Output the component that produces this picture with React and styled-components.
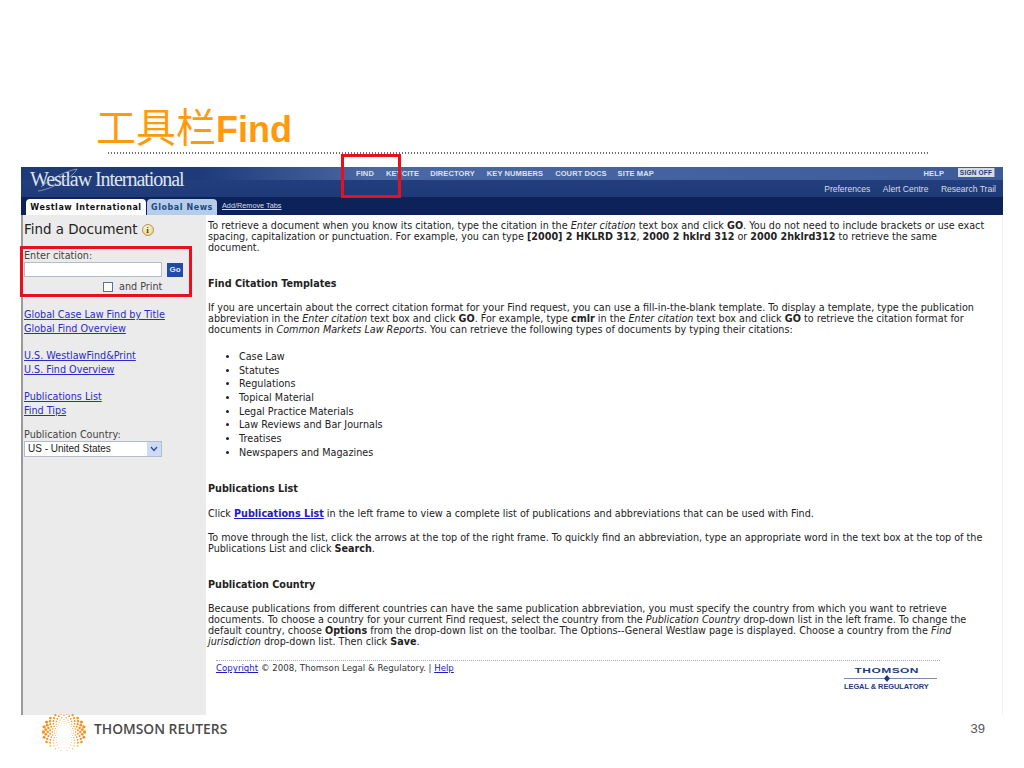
import React from "react";
import styled, { createGlobalStyle } from "styled-components";

const GlobalStyle = createGlobalStyle`
  html, body {
    margin: 0;
    padding: 0;
    background: #fff;
  }
  body {
    width: 1024px;
    height: 768px;
    overflow: hidden;
  }
`;

const Slide = styled.div`
  position: relative;
  width: 1024px;
  height: 768px;
  overflow: hidden;
  display: flex;
  flex-direction: column;
  background: #fff;
`;

const Title = styled.h1`
  margin: 0;
  padding: 98px 0 0 96px;
  height: 54px;
  line-height: 54px;
  font-family: "Liberation Sans", Arial, sans-serif;
  font-size: 36px;
  font-weight: bold;
  color: #ff9a0d;
  white-space: nowrap;
  span {
    font-family: "Noto Sans CJK SC", sans-serif;
    font-size: 40px;
    font-weight: 400;
  }
`;

const DottedRule = styled.div`
  margin: 0 94px 0 107px;
  height: 2px;
  background-image: radial-gradient(circle, #6d6d6d 0.8px, transparent 1px);
  background-size: 3px 2px;
`;

const Frame = styled.div`
  margin: 13px 21px 0 21px;
  height: 548px;
  display: flex;
  flex-direction: column;
  font-family: "DejaVu Sans", Verdana, sans-serif;
  color: #222;
`;

const Header = styled.header`
  height: 48px;
  display: flex;
  flex-direction: column;
  color: #fff;
`;

const TopBand = styled.div`
  height: 30px;
  display: flex;
  background:
    linear-gradient(to right, #1f3a78 0 18%, #4a68a4 36%, #3c5b98 100%) top / 100% 13px no-repeat,
    linear-gradient(to bottom, #24417f, #1f3a78);
`;

const Brand = styled.div`
  width: 335px;
  padding-left: 9px;
  box-sizing: border-box;
  position: relative;
  font-family: "Liberation Serif", "Times New Roman", serif;
  font-size: 20px;
  letter-spacing: -1.05px;
  line-height: 25px;
  color: #dfe5f0;
  svg {
    position: absolute;
    left: 14px;
    top: 0;
  }
`;

const NavArea = styled.div`
  flex: 1;
  display: flex;
  flex-direction: column;
`;

const NavTop = styled.div`
  height: 13px;
  display: flex;
  align-items: center;
  justify-content: space-between;
  padding: 0 8px 0 0;
`;

const NavLinks = styled.nav`
  display: flex;
`;

const NavLink = styled.span`
  margin-left: ${(p) => p.$left}px;
  font-family: "Liberation Sans", Arial, sans-serif;
  font-size: 7.5px;
  font-weight: bold;
  letter-spacing: 0.1px;
  color: #dbe3f1;
  white-space: nowrap;
`;

const NavRight = styled.div`
  display: flex;
  align-items: center;
  gap: 14px;
`;

const SignOff = styled.span`
  width: 37px;
  height: 9px;
  margin-top: -3px;
  background: #d6dbe6;
  border-right: 1px solid #8a93a8;
  box-sizing: border-box;
  color: #1f3a78;
  font-family: "Liberation Sans", Arial, sans-serif;
  font-size: 6.5px;
  font-weight: bold;
  letter-spacing: 0.2px;
  line-height: 9px;
  text-align: center;
`;

const SubLinks = styled.div`
  flex: 1;
  display: flex;
  justify-content: flex-end;
  align-items: center;
  gap: 12.5px;
  padding-right: 7px;
  font-family: "Liberation Sans", Arial, sans-serif;
  font-size: 8.55px;
  color: #d5dcea;
`;

const TabBand = styled.div`
  height: 18px;
  background: #0c2259;
  display: flex;
  align-items: flex-end;
  padding-left: 5px;
`;

const Tab = styled.div`
  height: 16px;
  width: ${(p) => p.$width}px;
  margin-right: 1px;
  border-radius: 4px 4px 0 0;
  background: ${(p) => (p.$active ? "#fff" : "#b5cdea")};
  color: ${(p) => (p.$active ? "#111" : "#1d4a80")};
  font-family: "DejaVu Sans", Verdana, sans-serif;
  font-size: 8px;
  font-weight: bold;
  letter-spacing: 0.55px;
  line-height: 17px;
  text-align: center;
  white-space: nowrap;
`;

const TabTool = styled.span`
  margin: 0 0 5px 4px;
  font-family: "Liberation Sans", Arial, sans-serif;
  font-size: 7.3px;
  color: #d7dff0;
  text-decoration: underline;
`;

const Body = styled.div`
  flex: 1;
  display: flex;
  min-height: 0;
`;

const Sidebar = styled.aside`
  width: 185px;
  box-sizing: border-box;
  border-left: 2px solid #9a9a9a;
  background: #ebebeb;
  padding: 6px 0 0 1px;
  font-size: 9.65px;
  line-height: 13.6px;
`;

const SideTitle = styled.div`
  display: flex;
  align-items: center;
  gap: 4px;
  height: 17px;
  font-size: 13.4px;
  color: #222;
  margin-bottom: 12px;
`;

const InfoIcon = styled.span`
  width: 12px;
  height: 12px;
  border-radius: 50%;
  border: 1px solid #b59a55;
  box-sizing: border-box;
  background: radial-gradient(circle at 40% 35%, #fff8d8, #e6c874);
  color: #4d3f10;
  font-family: "Liberation Serif", serif;
  font-size: 9px;
  font-weight: bold;
  line-height: 10px;
  text-align: center;
`;

const FieldLabel = styled.div`
  color: #444;
  height: 12px;
  line-height: 12px;
`;

const InputRow = styled.div`
  display: flex;
  align-items: center;
  gap: 5px;
`;

const TextBox = styled.div`
  width: 138px;
  height: 15px;
  box-sizing: border-box;
  background: #fff;
  border: 1px solid #b4bccb;
`;

const GoButton = styled.div`
  width: 16px;
  height: 14px;
  background: #1f4aa5;
  color: #dfe8f7;
  font-family: "Liberation Sans", Arial, sans-serif;
  font-size: 8px;
  font-weight: bold;
  line-height: 14px;
  text-align: center;
`;

const PrintRow = styled.div`
  display: flex;
  align-items: center;
  margin: 4px 0 0 79px;
  height: 11px;
  color: #444;
`;

const CheckBox = styled.span`
  width: 10px;
  height: 10px;
  box-sizing: border-box;
  border: 1px solid #5d6f8c;
  background: #fafafa;
  margin-right: 6px;
`;

const LinkGroup = styled.div`
  display: flex;
  flex-direction: column;
  margin-top: ${(p) => p.$top}px;
`;

const SideLink = styled.a`
  color: #2b2bc8;
  text-decoration: underline;
  white-space: nowrap;
`;

const SelectBox = styled.div`
  width: 138px;
  height: 16px;
  box-sizing: border-box;
  display: flex;
  align-items: center;
  justify-content: space-between;
  background: #fff;
  border: 1px solid #b4bccb;
  padding-left: 3px;
  font-family: "Liberation Sans", Arial, sans-serif;
  font-size: 10px;
  color: #222;
`;

const SelectArrow = styled.span`
  width: 14px;
  height: 14px;
  display: flex;
  align-items: center;
  justify-content: center;
  background: #cddcf6;
`;

const Content = styled.main`
  flex: 1;
  padding: 5px 0 0 2px;
  font-size: 9.65px;
  line-height: 11px;
  color: #222;
  white-space: nowrap;
  border-right: 1px solid #f2f2f2;
  em {
    font-style: italic;
  }
  b {
    font-weight: bold;
  }
`;

const Para = styled.p`
  margin: ${(p) => p.$top}px 0 0 0;
`;

const BulletList = styled.ul`
  margin: 15px 0 0 0;
  padding: 0 0 0 31px;
  line-height: 13.65px;
`;

const InlineLink = styled.a`
  color: #1c1cc4;
  font-weight: bold;
  text-decoration: underline;
`;

const Footnote = styled.div`
  margin: 13px 62px 0 8px;
  border-top: 1px dotted #aaa;
  display: flex;
  justify-content: space-between;
  padding-top: 2px;
  font-size: 8.65px;
  color: #333;
`;

const FootLink = styled.a`
  color: #1c1cc4;
  text-decoration: underline;
`;

const ThomsonMark = styled.div`
  width: 93px;
  margin: 3px 3px 0 0;
  font-family: "Liberation Sans", Arial, sans-serif;
  font-weight: bold;
  color: #1f3a78;
  text-align: center;
  line-height: 9px;
  svg {
    display: block;
  }
`;

const MarkTop = styled.div`
  font-size: 8px;
  letter-spacing: 0.3px;
  padding-right: 5px;
  transform: scaleX(1.5);
`;

const MarkBottom = styled.div`
  font-size: 7.5px;
  letter-spacing: -0.1px;
  text-align: left;
`;

const Footer = styled.footer`
  flex: 1;
  display: flex;
  align-items: flex-start;
  padding: 0 39px 0 42px;
`;

const OrbWrap = styled.div`
  width: 44px;
  height: 36px;
  margin-top: -1px;
`;

const Reuters = styled.div`
  margin: 6px 0 0 8px;
  font-family: "Open Sans", "Liberation Sans", sans-serif;
  font-size: 13.8px;
  font-weight: 600;
  line-height: 16px;
  color: #4a4a4a;
  white-space: nowrap;
`;

const PageNum = styled.div`
  margin: 7px 0 0 auto;
  font-family: "Liberation Sans", Arial, sans-serif;
  font-size: 13px;
  line-height: 14px;
  color: #555;
`;

const RedBox = styled.div`
  position: absolute;
  left: ${(p) => p.$x}px;
  top: ${(p) => p.$y}px;
  width: ${(p) => p.$w}px;
  height: ${(p) => p.$h}px;
  box-sizing: border-box;
  border: 3px solid #e8101c;
`;

const navItems = [
  ["FIND", 0],
  ["KEYCITE", 12],
  ["DIRECTORY", 11],
  ["KEY NUMBERS", 12],
  ["COURT DOCS", 12],
  ["SITE MAP", 11],
];

const bullets = [
  "Case Law",
  "Statutes",
  "Regulations",
  "Topical Material",
  "Legal Practice Materials",
  "Law Reviews and Bar Journals",
  "Treatises",
  "Newspapers and Magazines",
];

// dotted sphere logo: big dots on the sides, small ones top and bottom
function Orb() {
  const dots = [];
  const radii = [6.5, 8.5, 10.5, 12.5, 14.5, 16.5, 18.5];
  radii.forEach((r, i) => {
    const n = 22;
    for (let k = 0; k < n; k++) {
      const a = ((k + (i % 2) / 2) / n) * Math.PI * 2;
      const side = Math.abs(Math.cos(a));
      const lower = Math.sin(a) > 0 ? Math.sin(a) : 0;
      const size = (0.35 + (i / 6) * 1.35) * (0.45 + 0.55 * side) * (1 - 0.35 * lower);
      dots.push(
        <circle
          key={`${i}-${k}`}
          cx={22 + Math.cos(a) * r * 1.12}
          cy={18 + Math.sin(a) * r}
          r={size}
          fill={lower > 0.7 ? "#f9bd78" : "#f39322"}
        />
      );
    }
  });
  return (
    <svg width="44" height="38" viewBox="0 0 44 38">
      {dots}
    </svg>
  );
}

export default function App() {
  return (
    <Slide>
      <GlobalStyle />
      <Title>
        <span>工具栏</span>Find
      </Title>
      <DottedRule />
      <Frame>
        <Header>
          <TopBand>
            <Brand>
              Westlaw International
              <svg width="46" height="26" viewBox="0 0 46 26">
                <path d="M3 24 C18 22 38 10 42 2 C30 4 12 14 6 20" fill="none" stroke="#aab6cf" strokeWidth="0.7" />
              </svg>
            </Brand>
            <NavArea>
              <NavTop>
                <NavLinks>
                  {navItems.map(([label, left]) => (
                    <NavLink key={label} $left={left}>
                      {label}
                    </NavLink>
                  ))}
                </NavLinks>
                <NavRight>
                  <NavLink $left={0}>HELP</NavLink>
                  <SignOff>SIGN OFF</SignOff>
                </NavRight>
              </NavTop>
              <SubLinks>
                <span>Preferences</span>
                <span>Alert Centre</span>
                <span>Research Trail</span>
              </SubLinks>
            </NavArea>
          </TopBand>
          <TabBand>
            <Tab $active $width={120}>Westlaw International</Tab>
            <Tab $width={70}>Global News</Tab>
            <TabTool>Add/Remove Tabs</TabTool>
          </TabBand>
        </Header>
        <Body>
          <Sidebar>
            <SideTitle>
              Find a Document <InfoIcon>i</InfoIcon>
            </SideTitle>
            <FieldLabel>Enter citation:</FieldLabel>
            <InputRow>
              <TextBox />
              <GoButton>Go</GoButton>
            </InputRow>
            <PrintRow>
              <CheckBox />
              and Print
            </PrintRow>
            <LinkGroup $top={16}>
              <SideLink>Global Case Law Find by Title</SideLink>
              <SideLink>Global Find Overview</SideLink>
            </LinkGroup>
            <LinkGroup $top={14}>
              <SideLink>U.S. WestlawFind&amp;Print</SideLink>
              <SideLink>U.S. Find Overview</SideLink>
            </LinkGroup>
            <LinkGroup $top={14}>
              <SideLink>Publications List</SideLink>
              <SideLink>Find Tips</SideLink>
            </LinkGroup>
            <LinkGroup $top={11}>
              <FieldLabel>Publication Country:</FieldLabel>
              <SelectBox>
                US - United States
                <SelectArrow>
                  <svg width="8" height="6" viewBox="0 0 8 6">
                    <path d="M1 1 L4 4.5 L7 1" fill="none" stroke="#2a4a8a" strokeWidth="1.2" />
                  </svg>
                </SelectArrow>
              </SelectBox>
            </LinkGroup>
          </Sidebar>
          <Content>
            <Para $top={0}>
              To retrieve a document when you know its citation, type the citation in the <em>Enter citation</em> text box and click <b>GO</b>. You do not need to include brackets or use exact
              <br />
              spacing, capitalization or punctuation. For example, you can type <b>[2000] 2 HKLRD 312</b>, <b>2000 2 hklrd 312</b> or <b>2000 2hklrd312</b> to retrieve the same
              <br />
              document.
            </Para>
            <Para $top={25}>
              <b>Find Citation Templates</b>
            </Para>
            <Para $top={13}>
              If you are uncertain about the correct citation format for your Find request, you can use a fill-in-the-blank template. To display a template, type the publication
              <br />
              abbreviation in the <em>Enter citation</em> text box and click <b>GO</b>. For example, type <b>cmlr</b> in the <em>Enter citation</em> text box and click <b>GO</b> to retrieve the citation format for
              <br />
              documents in <em>Common Markets Law Reports</em>. You can retrieve the following types of documents by typing their citations:
            </Para>
            <BulletList>
              {bullets.map((item) => (
                <li key={item}>{item}</li>
              ))}
            </BulletList>
            <Para $top={24}>
              <b>Publications List</b>
            </Para>
            <Para $top={14}>
              Click <InlineLink>Publications List</InlineLink> in the left frame to view a complete list of publications and abbreviations that can be used with Find.
            </Para>
            <Para $top={13}>
              To move through the list, click the arrows at the top of the right frame. To quickly find an abbreviation, type an appropriate word in the text box at the top of the
              <br />
              Publications List and click <b>Search</b>.
            </Para>
            <Para $top={25}>
              <b>Publication Country</b>
            </Para>
            <Para $top={13}>
              Because publications from different countries can have the same publication abbreviation, you must specify the country from which you want to retrieve
              <br />
              documents. To choose a country for your current Find request, select the country from the <em>Publication Country</em> drop-down list in the left frame. To change the
              <br />
              default country, choose <b>Options</b> from the drop-down list on the toolbar. The Options--General Westlaw page is displayed. Choose a country from the <em>Find</em>
              <br />
              <em>jurisdiction</em> drop-down list. Then click <b>Save</b>.
            </Para>
            <Footnote>
              <span>
                <FootLink>Copyright</FootLink> © 2008, Thomson Legal &amp; Regulatory. | <FootLink>Help</FootLink>
              </span>
              <ThomsonMark>
                <MarkTop>THOMSON</MarkTop>
                <svg width="93" height="7" viewBox="0 0 93 7">
                  <line x1="0" y1="3.5" x2="93" y2="3.5" stroke="#5a6fa0" strokeWidth="0.8" />
                  <path d="M43 0 L46 3.5 L43 7 L40 3.5 Z" fill="#1f3a78" />
                </svg>
                <MarkBottom>LEGAL &amp; REGULATORY</MarkBottom>
              </ThomsonMark>
            </Footnote>
          </Content>
        </Body>
      </Frame>
      <Footer>
        <OrbWrap>
          <Orb />
        </OrbWrap>
        <Reuters>THOMSON REUTERS</Reuters>
        <PageNum>39</PageNum>
      </Footer>
      <RedBox $x={341} $y={154} $w={60} $h={44} />
      <RedBox $x={20} $y={246} $w={172} $h={51} />
    </Slide>
  );
}
